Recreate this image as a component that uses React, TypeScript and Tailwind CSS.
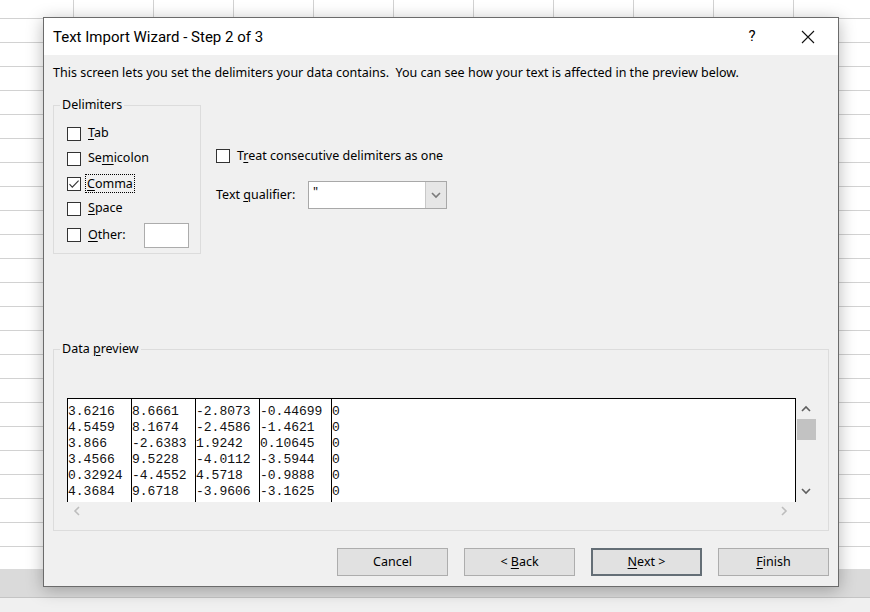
const rows = [
  ["3.6216", "8.6661", "-2.8073", "-0.44699", "0"],
  ["4.5459", "8.1674", "-2.4586", "-1.4621", "0"],
  ["3.866", "-2.6383", "1.9242", "0.10645", "0"],
  ["3.4566", "9.5228", "-4.0112", "-3.5944", "0"],
  ["0.32924", "-4.4552", "4.5718", "-0.9888", "0"],
  ["4.3684", "9.6718", "-3.9606", "-3.1625", "0"],
];

const colWidths = ["w-[64px] border-r", "w-[64px] border-r", "w-[64px] border-r", "w-[72px] border-r", "flex-1"];

function Check({ checked }: { checked?: boolean }) {
  return (
    <span className="w-[14px] h-[14px] border border-[#333333] bg-white flex items-center justify-center shrink-0">
      {checked && (
        <svg width="12" height="12" viewBox="0 0 12 12">
          <path d="M1.5 6.2 L4.3 9.2 L10.6 2.6" stroke="#333" strokeWidth="1.1" fill="none" />
        </svg>
      )}
    </span>
  );
}

function U({ children }: { children: string }) {
  return <span className="underline underline-offset-[2px] decoration-1">{children}</span>;
}

function Chevron({ dir, color }: { dir: "up" | "down" | "left" | "right"; color: string }) {
  const d = {
    up: "M1 6 L5 2 L9 6",
    down: "M1 2 L5 6 L9 2",
    left: "M6 1 L2 5 L6 9",
    right: "M2 1 L6 5 L2 9",
  }[dir];
  const w = dir === "up" || dir === "down" ? 10 : 8;
  const h = dir === "up" || dir === "down" ? 8 : 10;
  return (
    <svg width={w} height={h} viewBox={`0 0 ${w} ${h}`}>
      <path d={d} stroke={color} strokeWidth="1.6" fill="none" />
    </svg>
  );
}

function DelimRow({ checked, children, focus }: { checked?: boolean; children: React.ReactNode; focus?: boolean }) {
  return (
    <div className="h-[25px] flex items-center">
      <Check checked={checked} />
      <span className={focus ? "ml-[5px] px-[1px] leading-[17px] outline outline-1 outline-dotted outline-black" : "ml-[7px]"}>
        {children}
      </span>
    </div>
  );
}

function Btn({ children, primary }: { children: React.ReactNode; primary?: boolean }) {
  return (
    <button
      className={
        "w-[111px] h-[28px] bg-[#e1e1e1] text-[12.5px] text-black flex items-center justify-center " +
        (primary ? "border-2 border-[#646e76]" : "border border-[#adadad]")
      }
    >
      <span className="whitespace-pre">{children}</span>
    </button>
  );
}

export default function App() {
  return (
    <div className="relative w-[870px] h-[612px] overflow-hidden bg-white flex flex-col font-['Segoe_UI','Noto_Sans',sans-serif] text-black">
      <div className="h-[569px] bg-[linear-gradient(to_right,#d2d2d2_1px,transparent_1px),linear-gradient(to_bottom,#d2d2d2_1px,transparent_1px)] bg-size-[80px_24px] bg-position-[73px_18px]" />
      <div className="h-[29px] bg-[#dadada] border-b border-[#c4c4c4]" />
      <div className="flex-1 bg-[#f0f0f0]" />

      <div className="absolute left-[43px] top-[17px] w-[796px] border border-[#6b6b6b] bg-[#f0f0f0] shadow-[0_3px_16px_rgba(0,0,0,0.28)]">
        <div className="h-[37px] bg-white flex items-center pl-[9px] pr-[7px] text-[15px] font-['Segoe_UI',Roboto,sans-serif]">
          <span className="pt-[1px]">Text Import Wizard - Step 2 of 3</span>
          <span className="ml-auto w-[20px] text-center">?</span>
          <span className="ml-[23px] w-[46px] flex items-center justify-center">
            <svg width="14" height="14" viewBox="0 0 14 14">
              <path d="M1 1 L13 13 M13 1 L1 13" stroke="#111" strokeWidth="1.1" />
            </svg>
          </span>
        </div>

        <div className="pt-[10px] pl-[9px] pr-[9px] pb-[10px] text-[12.5px]">
          <div className="h-[16px] leading-[16px]">
            This screen lets you set the delimiters your data contains.&nbsp; You can see how your text is affected in the preview below.
          </div>

          <div className="mt-[16px] flex">
            <fieldset className="w-[148px] border border-[#dcdcdc] pl-[6px] pb-[4px]">
              <legend className="px-[2px] leading-[16px]">Delimiters</legend>
              <div className="pt-[8px] pl-[7px]">
                <DelimRow><U>T</U>ab</DelimRow>
                <DelimRow>Se<U>m</U>icolon</DelimRow>
                <DelimRow checked focus><U>C</U>omma</DelimRow>
                <DelimRow><U>S</U>pace</DelimRow>
                <div className="h-[28px] flex items-center">
                  <Check />
                  <span className="ml-[7px]"><U>O</U>ther:</span>
                  <span className="ml-auto mr-[11px] w-[45px] h-[25px] bg-white border border-[#acacac]" />
                </div>
              </div>
            </fieldset>

            <div className="ml-[15px] pt-[51px]">
              <div className="h-[16px] flex items-center">
                <Check />
                <span className="ml-[7px]">T<U>r</U>eat consecutive delimiters as one</span>
              </div>
              <div className="mt-[17px] h-[28px] flex items-center">
                <span className="w-[92px]">Text <U>q</U>ualifier:</span>
                <div className="w-[139px] h-[28px] bg-white border border-[#a8a8a8] flex">
                  <span className="flex-1 pl-[4px] leading-[20px]">"</span>
                  <span className="w-[21px] bg-[#e6e6e6] border-l border-[#c8c8c8] flex items-center justify-center">
                    <Chevron dir="down" color="#7a7a7a" />
                  </span>
                </div>
              </div>
            </div>
          </div>

          <fieldset className="mt-[87px] w-[776px] border border-[#dcdcdc] pl-[6px] pb-[10px]">
            <legend className="px-[2px] leading-[16px]">Data <U>p</U>review</legend>
            <div className="pt-[41px] pl-[7px]">
              <div className="flex">
                <div className="w-[729px] h-[104px] bg-white border-l border-t border-r border-black flex font-['Liberation_Mono',monospace] text-[13px] leading-[16px] text-[#111]">
                  {colWidths.map((w, c) => (
                    <div key={c} className={w + " border-black pt-[5px]"}>
                      {rows.map((r, i) => (
                        <div key={i} className="h-[16px] whitespace-pre">{r[c]}</div>
                      ))}
                    </div>
                  ))}
                </div>
                <div className="w-[20px] flex flex-col items-center">
                  <div className="h-[21px] flex items-center justify-center">
                    <Chevron dir="up" color="#5f5f5f" />
                  </div>
                  <div className="w-[19px] h-[21px] bg-[#c2c2c2]" />
                  <div className="flex-1" />
                  <div className="h-[22px] flex items-center justify-center">
                    <Chevron dir="down" color="#5f5f5f" />
                  </div>
                </div>
              </div>
              <div className="w-[749px] h-[18px] flex items-center justify-between px-[6px]">
                <Chevron dir="left" color="#bdbdbd" />
                <span className="mr-[22px]"><Chevron dir="right" color="#bdbdbd" /></span>
              </div>
            </div>
          </fieldset>

          <div className="mt-[17px] flex justify-end gap-[16px]">
            <Btn>Cancel</Btn>
            <Btn>{"< "}<U>B</U>ack</Btn>
            <Btn primary><U>N</U>ext{" >"}</Btn>
            <Btn><U>F</U>inish</Btn>
          </div>
        </div>
      </div>
    </div>
  );
}
